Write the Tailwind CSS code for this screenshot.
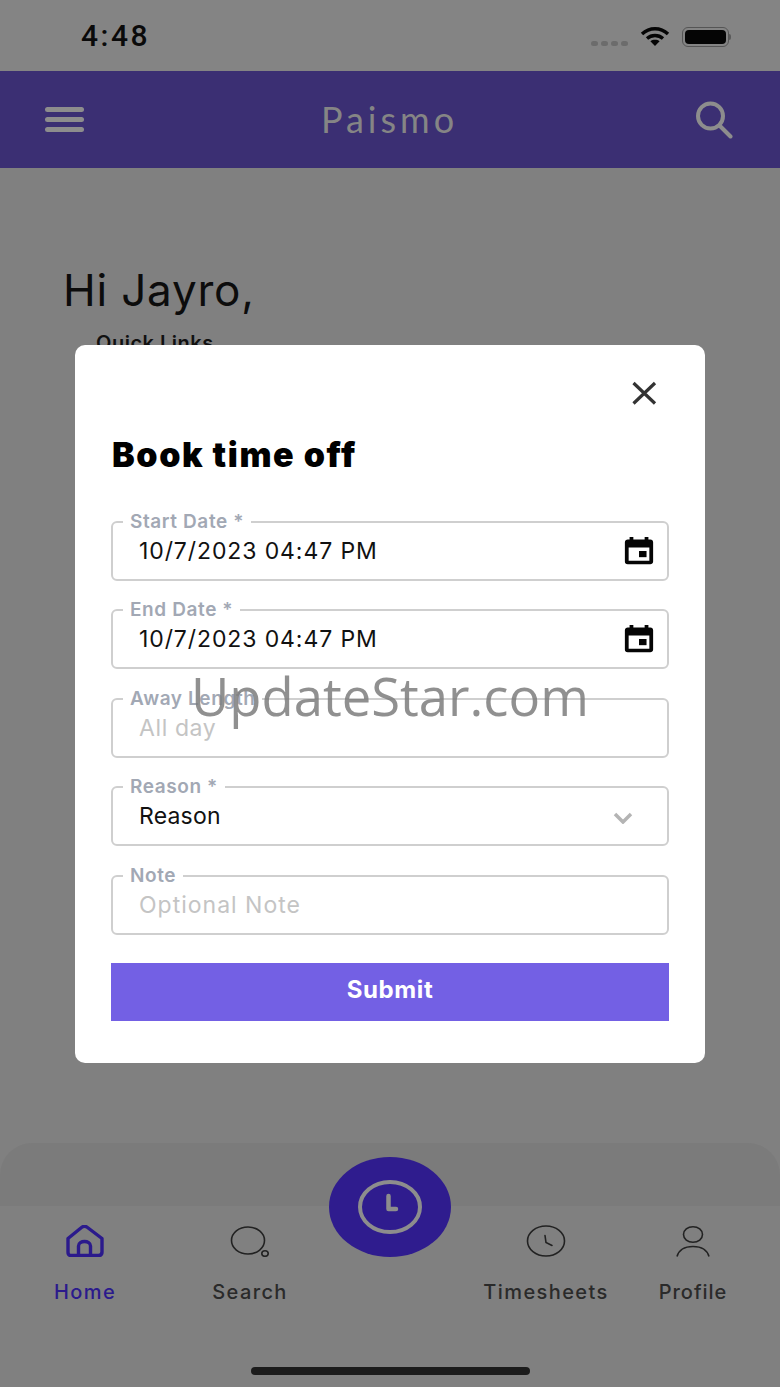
<!DOCTYPE html>
<html lang="en">

<head>
  <meta charset="UTF-8">
  <meta name="viewport" content="width=device-width, initial-scale=1.0">
  <title>Paismo - Book time off</title>
  <script src="https://cdn.jsdelivr.net/npm/@tailwindcss/browser@4"></script>
</head>

<body class="bg-[#808080]">
  <div class="relative w-[780px] h-[1387px] overflow-hidden bg-[#808080] font-['Inter',sans-serif]">

    <!-- status bar -->
    <div class="h-[71px] bg-[#848484] flex items-start justify-between pl-[81px] pr-[49px]">
      <div class="mt-[20px] text-[30px] leading-[32px] font-medium text-[#0a0a0a] font-['Roboto',sans-serif] tracking-[2.5px]">4:48</div>
      <div class="mt-[26px] flex items-center">
        <div class="flex gap-[3px] mt-[14px] mr-[12px]">
          <span class="w-[7px] h-[5px] rounded-sm bg-[#6c6c6c]"></span>
          <span class="w-[7px] h-[5px] rounded-sm bg-[#6c6c6c]"></span>
          <span class="w-[7px] h-[5px] rounded-sm bg-[#6c6c6c]"></span>
          <span class="w-[7px] h-[5px] rounded-sm bg-[#6c6c6c]"></span>
        </div>
        <svg class="w-[30px] h-[21px]" viewBox="0 0 30 20" fill="none" stroke="#050505" stroke-width="3.4">
          <path d="M2 7.5C9.5 0.5 20.5 0.5 28 7.5" />
          <path d="M7 12C11.5 8 18.5 8 23 12" />
          <path d="M15 19.5l-4.6-4.8c2.6-1.8 6.6-1.8 9.2 0z" fill="#050505" stroke="none" />
        </svg>
        <div class="ml-[12px] w-[47px] h-[20px] rounded-[6px] border border-[#555] p-[2px]">
          <div class="w-full h-full rounded-[4px] bg-[#050505]"></div>
        </div>
        <div class="w-[2px] h-[6px] bg-[#5a5a5a] rounded-r-sm"></div>
      </div>
    </div>

    <!-- header -->
    <div class="h-[97px] bg-[#3b2f73] flex items-center justify-between pl-[45px] pr-[47px]">
      <div class="flex flex-col gap-[5px] w-[39px]">
        <span class="h-[5px] rounded-sm bg-[#8d8d8d]"></span>
        <span class="h-[5px] rounded-sm bg-[#8d8d8d]"></span>
        <span class="h-[5px] rounded-sm bg-[#8d8d8d]"></span>
      </div>
      <div class="text-[36px] leading-[40px] font-['Lato',sans-serif] text-[#858585] tracking-[4px] mb-[2px]">Paismo</div>
      <svg class="w-[38px] h-[38px]" viewBox="0 0 38 38" fill="none" stroke="#8d8d8d" stroke-width="4">
        <circle cx="15.5" cy="15" r="12.5" />
        <path d="M24.5 24.5L35.5 35.5" stroke-linecap="round" />
      </svg>
    </div>

    <!-- page behind the dialog -->
    <div class="pl-[63px] pt-[97px]">
      <div class="text-[44px] leading-[50px] text-[#0c0c0c] tracking-[0.8px]">Hi Jayro,</div>
      <div class="ml-[33px] mt-[16px] text-[20px] leading-[24px] font-semibold tracking-[0.5px] text-[#111]">Quick Links</div>
    </div>

    <!-- bottom nav -->
    <div class="absolute left-0 right-0 top-[1143px] h-[63px] rounded-t-[32px] bg-[#7b7b7b]"></div>
    <div class="absolute left-0 right-0 top-[1206px] bottom-0 bg-[#808080]">
      <div class="absolute left-[45px] top-[19px] w-[80px] flex flex-col items-center">
        <svg class="w-[38px] h-[32px]" viewBox="0 0 38 32" fill="none" stroke="#2b1a8c" stroke-width="3.4" stroke-linejoin="round">
          <path d="M2 13.5L15.5 2.5c2-1.5 4-1.5 6 0L36 13.5V27c0 2-1 3.5-3.5 3.5h-28C2.500 30.500 2 29 2 27z" />
          <path d="M12.500 30V21c0-6 12-6 12 0v9" />
        </svg>
        <div class="mt-[22px] text-[20px] leading-[26px] font-medium text-[#2b1a8c] tracking-[1.4px]">Home</div>
      </div>
      <div class="absolute left-[205px] top-[19px] w-[90px] flex flex-col items-center">
        <svg class="w-[40px] h-[32px]" viewBox="0 0 40 32" fill="none" stroke="#222" stroke-width="1.6">
          <ellipse cx="18" cy="15.500" rx="16.500" ry="13.500" />
          <ellipse cx="35" cy="28.500" rx="3.200" ry="2.800" />
        </svg>
        <div class="mt-[22px] text-[20px] leading-[26px] font-medium text-[#2a2a2a] tracking-[1.4px]">Search</div>
      </div>
      <div class="absolute left-[474px] top-[19px] w-[144px] flex flex-col items-center">
        <svg class="w-[40px] h-[32px]" viewBox="0 0 40 32" fill="none" stroke="#222" stroke-width="1.6">
          <ellipse cx="20" cy="16" rx="18.500" ry="15" />
          <path d="M19 10.500L20 17.500L26 20.500" stroke-linecap="round" />
        </svg>
        <div class="mt-[22px] text-[20px] leading-[26px] font-medium text-[#2a2a2a] tracking-[1.4px]">Timesheets</div>
      </div>
      <div class="absolute left-[648px] top-[19px] w-[90px] flex flex-col items-center">
        <svg class="w-[36px] h-[32px]" viewBox="0 0 36 32" fill="none" stroke="#222" stroke-width="1.6">
          <ellipse cx="18" cy="9.500" rx="9.500" ry="7.800" />
          <path d="M2 31.500C4 24.500 10 21.500 18 21.500S32 24.500 34 31.500" />
        </svg>
        <div class="mt-[22px] text-[20px] leading-[26px] font-medium text-[#2a2a2a] tracking-[1px]">Profile</div>
      </div>
    </div>

    <!-- clock button -->
    <div class="absolute left-[329px] top-[1157px] w-[122px] h-[100px] rounded-[50%] bg-[#2f1c8e] flex items-center justify-center">
      <svg class="w-[64px] h-[54px]" viewBox="0 0 64 54" fill="none" stroke="#8d8d8d">
        <ellipse cx="32" cy="27" rx="30" ry="25" stroke-width="4" />
        <path d="M30.500 16V29H38" stroke-width="4.500" stroke-linecap="round" stroke-linejoin="round" />
      </svg>
    </div>

    <!-- home indicator -->
    <div class="absolute left-[251px] top-[1367px] w-[279px] h-[8px] rounded-full bg-[#1c1c1c]"></div>

    <!-- dialog -->
    <div class="absolute left-[75px] top-[345px] w-[630px] h-[718px] rounded-[10px] bg-white px-[36px]">
      <div class="flex justify-end pt-[36px] pr-[12px]">
        <svg class="w-[26px] h-[24px]" viewBox="0 0 24 24" fill="none" stroke="#333" stroke-width="3.200">
          <path d="M1.500 2L23 22.500M23 2L1.500 22.500" />
        </svg>
      </div>
      <h2 class="mt-[30px] ml-[1px] text-[34px] leading-[40px] font-black tracking-[1.6px] text-black">Book time off</h2>

      <div class="mt-[45.6px] flex flex-col gap-[28.5px]">
        <div class="relative h-[60px] rounded-[6px] border-2 border-[#cfcfcf] flex items-center justify-between pl-[26px] pr-[12px]">
          <span class="absolute left-[10px] top-[-12px] bg-white px-[7px] text-[19px] leading-[22px] font-semibold tracking-[0.6px] text-[#a2a8b4]">Start Date *</span>
          <span class="text-[23px] leading-[28px] text-[#111] tracking-[0.9px]">10/7/2023 04:47 PM</span>
          <svg class="w-[32px] h-[30px]" viewBox="0 0 34 34" preserveAspectRatio="none" fill="#050505">
            <path d="M7 1h4v3h12V1h4v3h2c2 0 3 1.500 3 3v22c0 2-1.500 3-3 3H5c-2 0-3-1-3-3V7c0-2 1.500-3 3-3h2zM6 13v15h22V13z" />
            <rect x="17" y="17" width="8" height="7" />
          </svg>
        </div>

        <div class="relative h-[60px] rounded-[6px] border-2 border-[#cfcfcf] flex items-center justify-between pl-[26px] pr-[12px]">
          <span class="absolute left-[10px] top-[-12px] bg-white px-[7px] text-[19px] leading-[22px] font-semibold tracking-[0.6px] text-[#a2a8b4]">End Date *</span>
          <span class="text-[23px] leading-[28px] text-[#111] tracking-[0.9px]">10/7/2023 04:47 PM</span>
          <svg class="w-[32px] h-[30px]" viewBox="0 0 34 34" preserveAspectRatio="none" fill="#050505">
            <path d="M7 1h4v3h12V1h4v3h2c2 0 3 1.500 3 3v22c0 2-1.500 3-3 3H5c-2 0-3-1-3-3V7c0-2 1.500-3 3-3h2zM6 13v15h22V13z" />
            <rect x="17" y="17" width="8" height="7" />
          </svg>
        </div>

        <div class="relative h-[60px] rounded-[6px] border-2 border-[#cfcfcf] flex items-center pl-[26px] pr-[12px]">
          <span class="absolute left-[10px] top-[-12px] bg-white px-[7px] text-[19px] leading-[22px] font-semibold tracking-[0.6px] text-[#a2a8b4]">Away Length</span>
          <span class="text-[23px] leading-[28px] text-[#c4c4c4] tracking-[0.6px]">All day</span>
        </div>

        <div class="relative h-[60px] rounded-[6px] border-2 border-[#cfcfcf] flex items-center justify-between pl-[26px] pr-[34px]">
          <span class="absolute left-[10px] top-[-12px] bg-white px-[7px] text-[19px] leading-[22px] font-semibold tracking-[0.6px] text-[#a2a8b4]">Reason *</span>
          <span class="text-[23px] leading-[28px] text-[#111] tracking-[0.2px]">Reason</span>
          <svg class="w-[20px] h-[12px] mt-[4px]" viewBox="0 0 20 12" fill="none" stroke="#b4b4b4" stroke-width="3.500">
            <path d="M2 2l8 8 8-8" />
          </svg>
        </div>

        <div class="relative h-[60px] rounded-[6px] border-2 border-[#cfcfcf] flex items-center pl-[26px] pr-[12px]">
          <span class="absolute left-[10px] top-[-12px] bg-white px-[7px] text-[19px] leading-[22px] font-semibold tracking-[0.6px] text-[#a2a8b4]">Note</span>
          <span class="text-[23px] leading-[28px] text-[#c4c4c4] tracking-[1px]">Optional Note</span>
        </div>
      </div>

      <div class="mt-[28px] h-[58px] pb-[3px] bg-[#7360e4] flex items-center justify-center text-[24px] font-bold tracking-[0.6px] text-white">Submit</div>
    </div>

    <!-- watermark -->
    <div class="absolute left-[191px] top-[661px] text-[52.6px] leading-[70px] text-[#7c7c7c]/85 font-['Open_Sans',sans-serif]">UpdateStar.com</div>
  </div>
</body>

</html>
